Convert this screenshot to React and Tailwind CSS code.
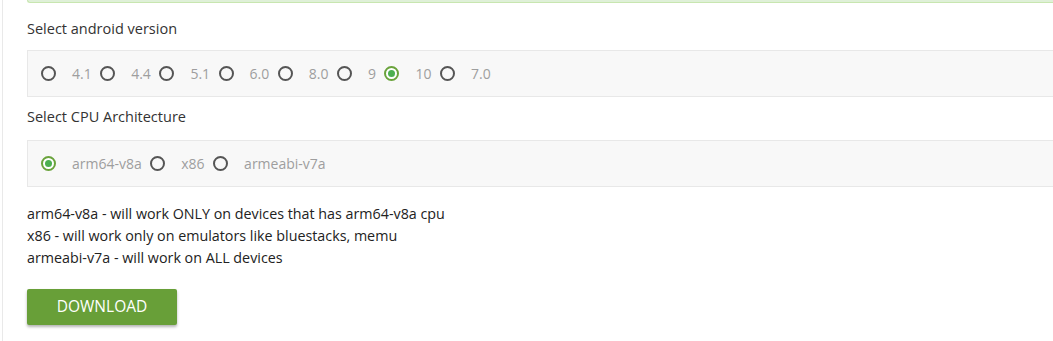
import { useState } from "react"

const versions = ["4.1", "4.4", "5.1", "6.0", "8.0", "9", "10", "7.0"]
const arches = ["arm64-v8a", "x86", "armeabi-v7a"]

function Radio({ checked, label, onClick }) {
  return (
    <label className="flex items-center cursor-pointer" onClick={onClick}>
      <span
        className={
          checked
            ? "flex items-center justify-center w-[15px] h-[15px] rounded-full border-2 border-[#6aa33c] bg-white"
            : "w-[15px] h-[15px] rounded-full border-2 border-[#555555]"
        }
      >
        {checked && <span className="w-[7px] h-[7px] rounded-full bg-[#4caf50]" />}
      </span>
      <span className="ml-[16px] mr-[8.5px] text-[14px] text-[#9e9e9e]">{label}</span>
    </label>
  )
}

export default function App() {
  const [version, setVersion] = useState("10")
  const [arch, setArch] = useState("arm64-v8a")

  return (
    <div className="w-[1053px] h-[341px] bg-white overflow-hidden font-['Open_Sans',sans-serif] text-[#333333]">
      <div className="ml-[2px] h-full border-l border-[#e9e9e9] pl-[24px]">
        {/* alert box edge from above */}
        <div className="h-[3px] bg-[#dff0d8] border-b border-l border-[#c8e6b0] rounded-bl-[4px]" />

        <p className="mt-[16px] text-[14.5px] leading-[20px]">Select android version</p>
        <div className="mt-[11px] h-[47px] flex items-center pl-[13px] bg-[#f8f8f8] border border-r-0 border-[#e8e8e8]">
          {versions.map((v) => (
            <Radio key={v} label={v} checked={version === v} onClick={() => setVersion(v)} />
          ))}
        </div>

        <p className="mt-[10px] text-[14.5px] leading-[20px]">Select CPU Architecture</p>
        <div className="mt-[13px] h-[47px] flex items-center pl-[13px] bg-[#f8f8f8] border border-r-0 border-[#e8e8e8]">
          {arches.map((a) => (
            <Radio key={a} label={a} checked={arch === a} onClick={() => setArch(a)} />
          ))}
        </div>

        <div className="mt-[16px] text-[14.3px] leading-[22px] text-[#222]">
          <p>arm64-v8a - will work ONLY on devices that has arm64-v8a cpu</p>
          <p>x86 - will work only on emulators like bluestacks, memu</p>
          <p>armeabi-v7a - will work on ALL devices</p>
        </div>

        <button className="mt-[20px] w-[150px] h-[36px] rounded-[2px] bg-[#689f38] text-white text-[15.5px] uppercase shadow-[0_2px_3px_rgba(0,0,0,0.3)]">
          Download
        </button>
      </div>
    </div>
  )
}
